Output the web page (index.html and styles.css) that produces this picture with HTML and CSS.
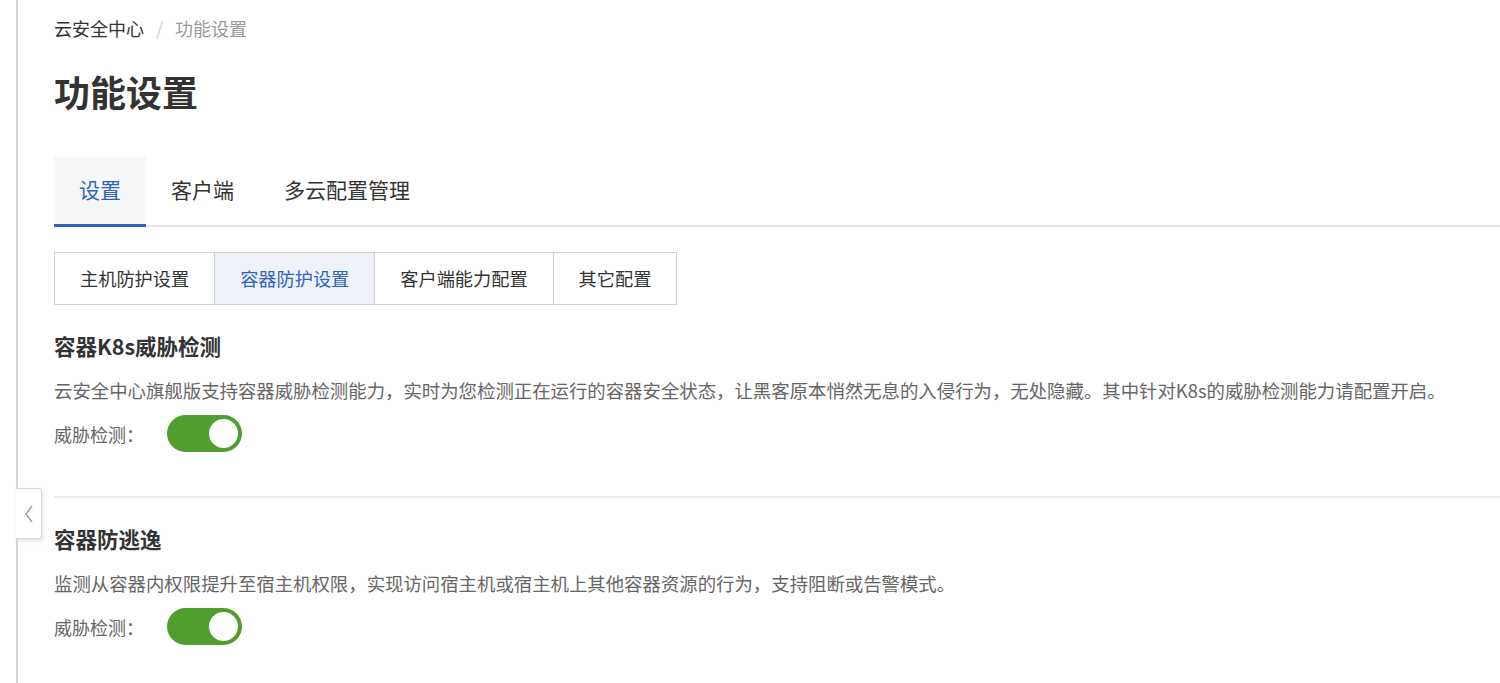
FILE: index.html
```html
<!DOCTYPE html>
<html lang="zh-CN">
<head>
	<meta charset="UTF-8">
	<title>功能设置</title>
	<link rel="stylesheet" href="styles.css">
</head>
<body>
<div class="page">
    <div class="crumbs">
        <span class="crumb">云安全中心</span>
        <span class="sep">/</span>
        <span class="crumb current">功能设置</span>
    </div>
    <h1 class="title">功能设置</h1>

    <div class="tabs">
        <span class="tab on">设置</span>
        <span class="tab">客户端</span>
        <span class="tab">多云配置管理</span>
    </div>

    <div class="seg">
        <span class="seg-btn">主机防护设置</span>
        <span class="seg-btn on">容器防护设置</span>
        <span class="seg-btn">客户端能力配置</span>
        <span class="seg-btn">其它配置</span>
    </div>

    <div class="block">
        <h3 class="block-title">容器K8s威胁检测</h3>
        <p class="desc">云安全中心旗舰版支持容器威胁检测能力，实时为您检测正在运行的容器安全状态，让黑客原本悄然无息的入侵行为，无处隐藏。其中针对K8s的威胁检测能力请配置开启。</p>
        <div class="row">
            <span class="label">威胁检测：</span>
            <span class="switch on"><i></i></span>
        </div>
    </div>

    <div class="block">
        <h3 class="block-title">容器防逃逸</h3>
        <p class="desc">监测从容器内权限提升至宿主机权限，实现访问宿主机或宿主机上其他容器资源的行为，支持阻断或告警模式。</p>
        <div class="row">
            <span class="label">威胁检测：</span>
            <span class="switch on"><i></i></span>
        </div>
    </div>

    <a href="javascript:;" class="fold">
        <svg width="10" height="18" viewBox="0 0 10 18"><path d="M8 1 L2 9 L8 17" fill="none" stroke="#9a9a9a" stroke-width="1.4"/></svg>
    </a>
</div>
</body>
</html>
```

FILE: styles.css
```css
*
{
    margin: 0;
    padding: 0;
    box-sizing: border-box;
    text-decoration: none;
}
body
{
    font-family: "Noto Sans CJK SC", "Noto Sans", sans-serif;
    color: #333;
    background: #fff;
    overflow: hidden;
}
.page
{
    position: relative;
    min-height: 683px;
    margin-left: 16px;
    padding: 16px 0 0 36px;
    border-left: 2px solid #d6d6d6;
}
.crumbs
{
    display: flex;
    gap: 12px;
    font-size: 18px;
    line-height: 24px;
}
.sep
{
    color: #d0d0d0;
}
.crumb.current
{
    color: #999;
}
.title
{
    margin-top: 27px;
    font-size: 36px;
    line-height: 48px;
    font-weight: bold;
    color: #333;
}
.tabs
{
    display: flex;
    margin-top: 42px;
    border-bottom: 2px solid #e6e6e6;
}
.tab
{
    padding: 0 25px;
    height: 68px;
    line-height: 64px;
    font-size: 21px;
    color: #333;
}
.tab.on
{
    color: #2f63c0;
    background: #f6f7f9;
    border-bottom: 3px solid #2f63c0;
    margin-bottom: -2px;
    height: 70px;
}
.seg
{
    display: inline-flex;
    margin-top: 25px;
    border: 1px solid #d0d0d0;
}
.seg-btn
{
    height: 51px;
    line-height: 51px;
    padding: 0 25px;
    font-size: 18.2px;
    color: #333;
    border-left: 1px solid #d0d0d0;
}
.seg-btn:first-child
{
    border-left: none;
}
.seg-btn.on
{
    color: #2f63c0;
    background: #eef1f7;
}
.block
{
    padding: 26px 0 44px;
    border-bottom: 2px solid #ececec;
}
.block + .block
{
    border-bottom: none;
}
.block-title
{
    font-size: 21.5px;
    line-height: 30px;
    font-weight: bold;
    color: #333;
}
.desc
{
    margin-top: 15px;
    font-size: 18.4px;
    line-height: 28px;
    color: #666;
}
.row
{
    display: flex;
    align-items: center;
    margin-top: 11px;
}
.label
{
    width: 113px;
    font-size: 18px;
    color: #666;
}
.switch
{
    position: relative;
    width: 75px;
    height: 37px;
    border-radius: 19px;
    background: #4f9e2e;
}
.switch i
{
    position: absolute;
    top: 4px;
    right: 4px;
    width: 29px;
    height: 29px;
    border-radius: 50%;
    background: #fff;
}
.fold
{
    position: absolute;
    left: -2px;
    top: 488px;
    width: 26px;
    height: 51px;
    display: flex;
    align-items: center;
    justify-content: center;
    background: #fff;
    border: 1px solid #d8d8d8;
    border-left: none;
    border-radius: 0 4px 4px 0;
    box-shadow: 1px 2px 4px rgba(0,0,0,.12);
}
```
